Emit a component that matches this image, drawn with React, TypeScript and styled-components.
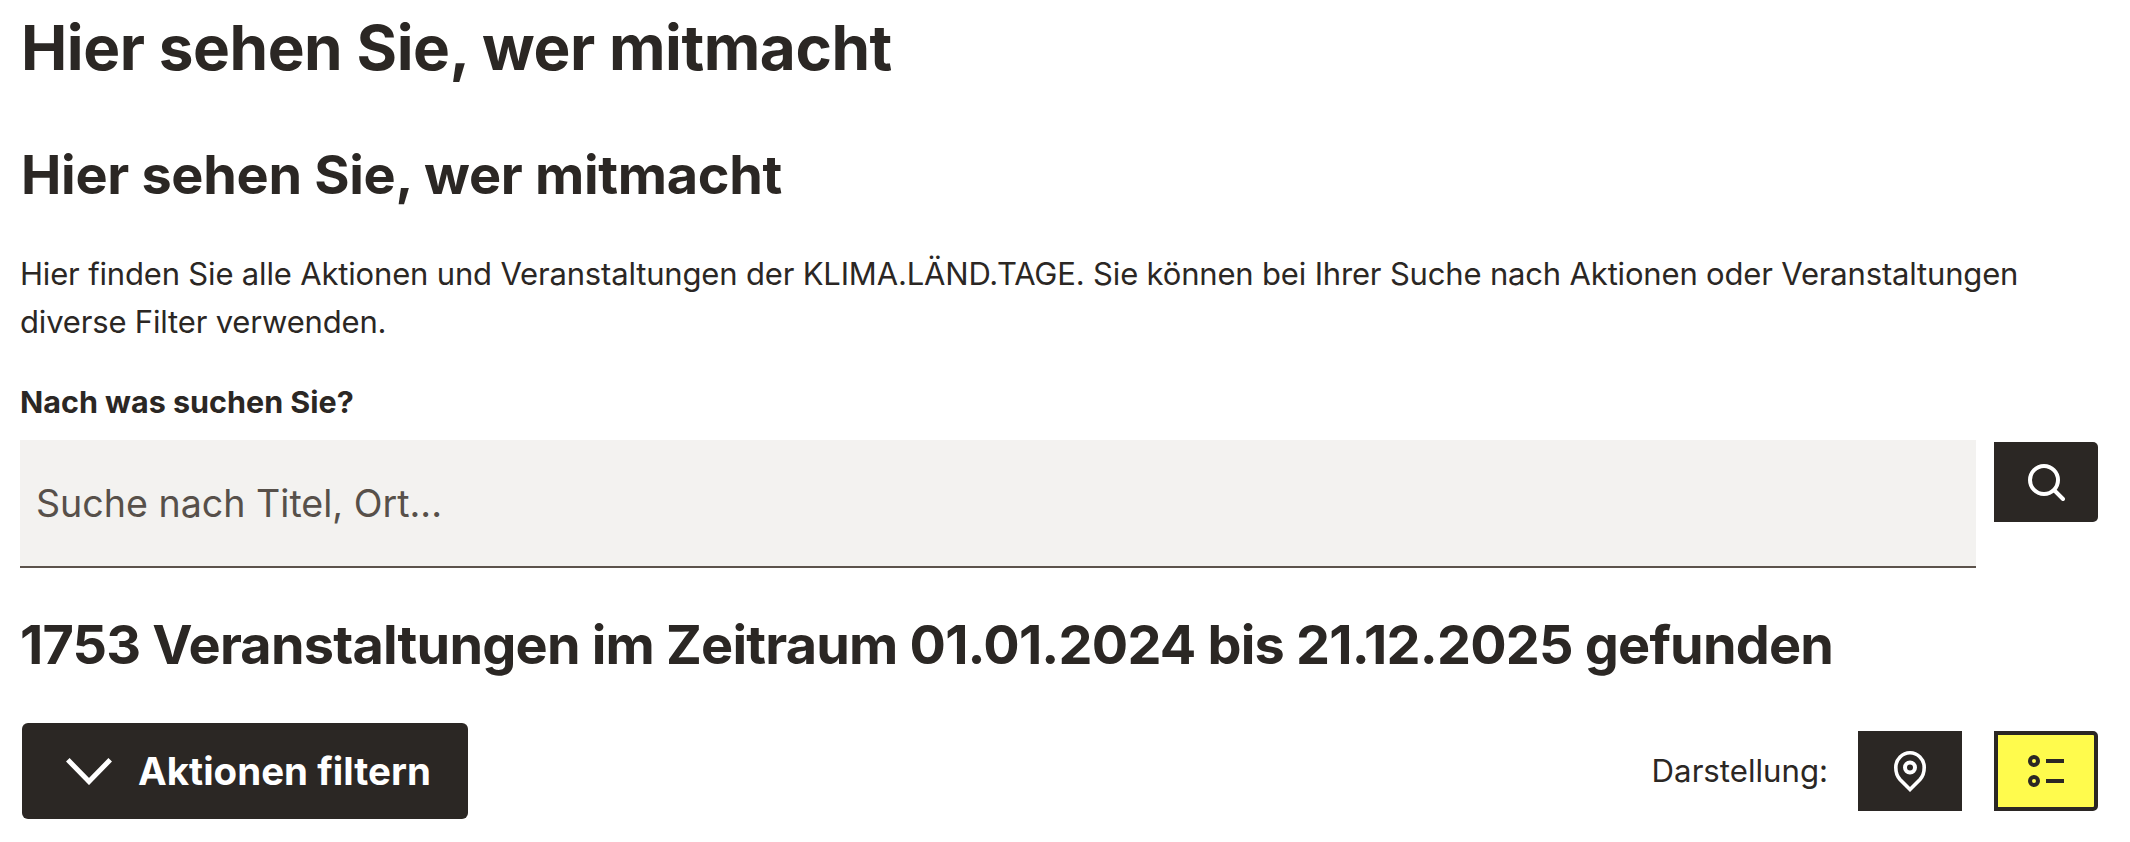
import React from "react";
import styled, { createGlobalStyle } from "styled-components";

const Global = createGlobalStyle`
  html, body { margin: 0; padding: 0; background: #fff; }
  body { font-family: Inter, "Liberation Sans", sans-serif; color: #2b2724; }
`;

const Page = styled.main`
  width: 2130px;
  height: 842px;
  box-sizing: border-box;
  padding: 0 32px 0 20px;
  overflow: hidden;
`;

const Title = styled.h1`
  margin: 14px 0 0 1px;
  font-size: 62px;
  line-height: 68px;
  font-weight: 700;
  letter-spacing: -0.45px;
`;

const Subtitle = styled.h2`
  margin: 63px 0 0 1px;
  font-size: 54px;
  line-height: 60px;
  font-weight: 700;
  letter-spacing: -0.3px;
`;

const Intro = styled.p`
  margin: 45px 0 0;
  font-size: 31px;
  line-height: 48px;
  font-weight: 400;
  letter-spacing: -0.17px;
`;

const FieldLabel = styled.label`
  display: block;
  margin: 36px 0 0;
  font-size: 30.5px;
  line-height: 40px;
  font-weight: 700;
`;

const SearchRow = styled.div`
  display: flex;
  align-items: flex-start;
  gap: 18px;
  margin-top: 18px;
`;

const SearchInput = styled.div`
  width: 1956px;
  height: 128px;
  box-sizing: border-box;
  display: flex;
  align-items: center;
  padding-left: 16px;
  background: #f3f2f0;
  border-bottom: 2px solid #5c534c;
  font-size: 37.6px;
  color: #57504a;
`;

const IconButton = styled.button<{ $active?: boolean }>`
  width: 104px;
  height: 80px;
  box-sizing: border-box;
  display: flex;
  align-items: center;
  justify-content: center;
  padding: 0;
  background: ${(p) => (p.$active ? "#fffb4d" : "#2b2724")};
  color: ${(p) => (p.$active ? "#2b2724" : "#fff")};
  border: ${(p) => (p.$active ? "4px solid #2b2724" : "none")};
  border-radius: 0 5px 5px 0;
`;

const SearchButton = styled(IconButton)`
  margin-top: 2px;
`;

const ResultHeading = styled.h2`
  margin: 47px 0 0;
  font-size: 54px;
  line-height: 60px;
  font-weight: 700;
  letter-spacing: -0.8px;
`;

const Toolbar = styled.div`
  display: flex;
  align-items: center;
  justify-content: space-between;
  margin: 48px 0 0 2px;
`;

const FilterButton = styled.button`
  display: flex;
  align-items: center;
  gap: 26px;
  width: 446px;
  height: 96px;
  box-sizing: border-box;
  padding: 0 0 0 44px;
  background: #2b2724;
  color: #fff;
  border: none;
  border-radius: 6px;
  font-family: inherit;
  font-size: 38.5px;
  font-weight: 700;
`;

const ViewControls = styled.div`
  display: flex;
  align-items: center;
`;

const ViewLabel = styled.span`
  font-size: 31.2px;
  margin-right: 30px;
`;

const MapButton = styled(IconButton)`
  border-radius: 0;
  margin-right: 32px;
`;

export default function App() {
  return (
    <Page>
      <Global />
      <Title>Hier sehen Sie, wer mitmacht</Title>
      <Subtitle>Hier sehen Sie, wer mitmacht</Subtitle>
      <Intro>
        Hier finden Sie alle Aktionen und Veranstaltungen der KLIMA.LÄND.TAGE. Sie können bei Ihrer Suche nach Aktionen oder Veranstaltungen<br />
        diverse Filter verwenden.
      </Intro>
      <FieldLabel>Nach was suchen Sie?</FieldLabel>
      <SearchRow>
        <SearchInput>Suche nach Titel, Ort...</SearchInput>
        <SearchButton aria-label="Suchen">
          <svg width="37" height="37" viewBox="0 0 37 37" fill="none" stroke="currentColor" strokeWidth="4" strokeLinecap="round">
            <circle cx="16" cy="16" r="14" />
            <path d="M26.5 26.5 L35 35" />
          </svg>
        </SearchButton>
      </SearchRow>
      <ResultHeading>1753 Veranstaltungen im Zeitraum 01.01.2024 bis 21.12.2025 gefunden</ResultHeading>
      <Toolbar>
        <FilterButton>
          <svg width="46" height="27" viewBox="0 0 46 27" fill="none" stroke="currentColor" strokeWidth="5">
            <path d="M1.8 1.8 L23 23.5 L44.2 1.8" />
          </svg>
          Aktionen filtern
        </FilterButton>
        <ViewControls>
          <ViewLabel>Darstellung:</ViewLabel>
          <MapButton aria-label="Karte">
            <svg width="32" height="41" viewBox="0 0 32 41" fill="none" stroke="currentColor" strokeWidth="3.6">
              <path d="M16 38.5 L6 28.5 C3.4 25.6 1.8 22 1.8 16.5 C1.8 8 8.5 1.8 16 1.8 C23.5 1.8 30.2 8 30.2 16.5 C30.2 22 28.6 25.6 26 28.5 Z" />
              <circle cx="16" cy="16.5" r="5" strokeWidth="4" />
            </svg>
          </MapButton>
          <IconButton $active aria-label="Liste">
            <svg width="36" height="32" viewBox="0 0 36 32" fill="none" stroke="currentColor" strokeWidth="4">
              <circle cx="6" cy="6" r="4" />
              <circle cx="6" cy="26" r="4" />
              <path d="M18 6 H36 M18 26 H36" />
            </svg>
          </IconButton>
        </ViewControls>
      </Toolbar>
    </Page>
  );
}
